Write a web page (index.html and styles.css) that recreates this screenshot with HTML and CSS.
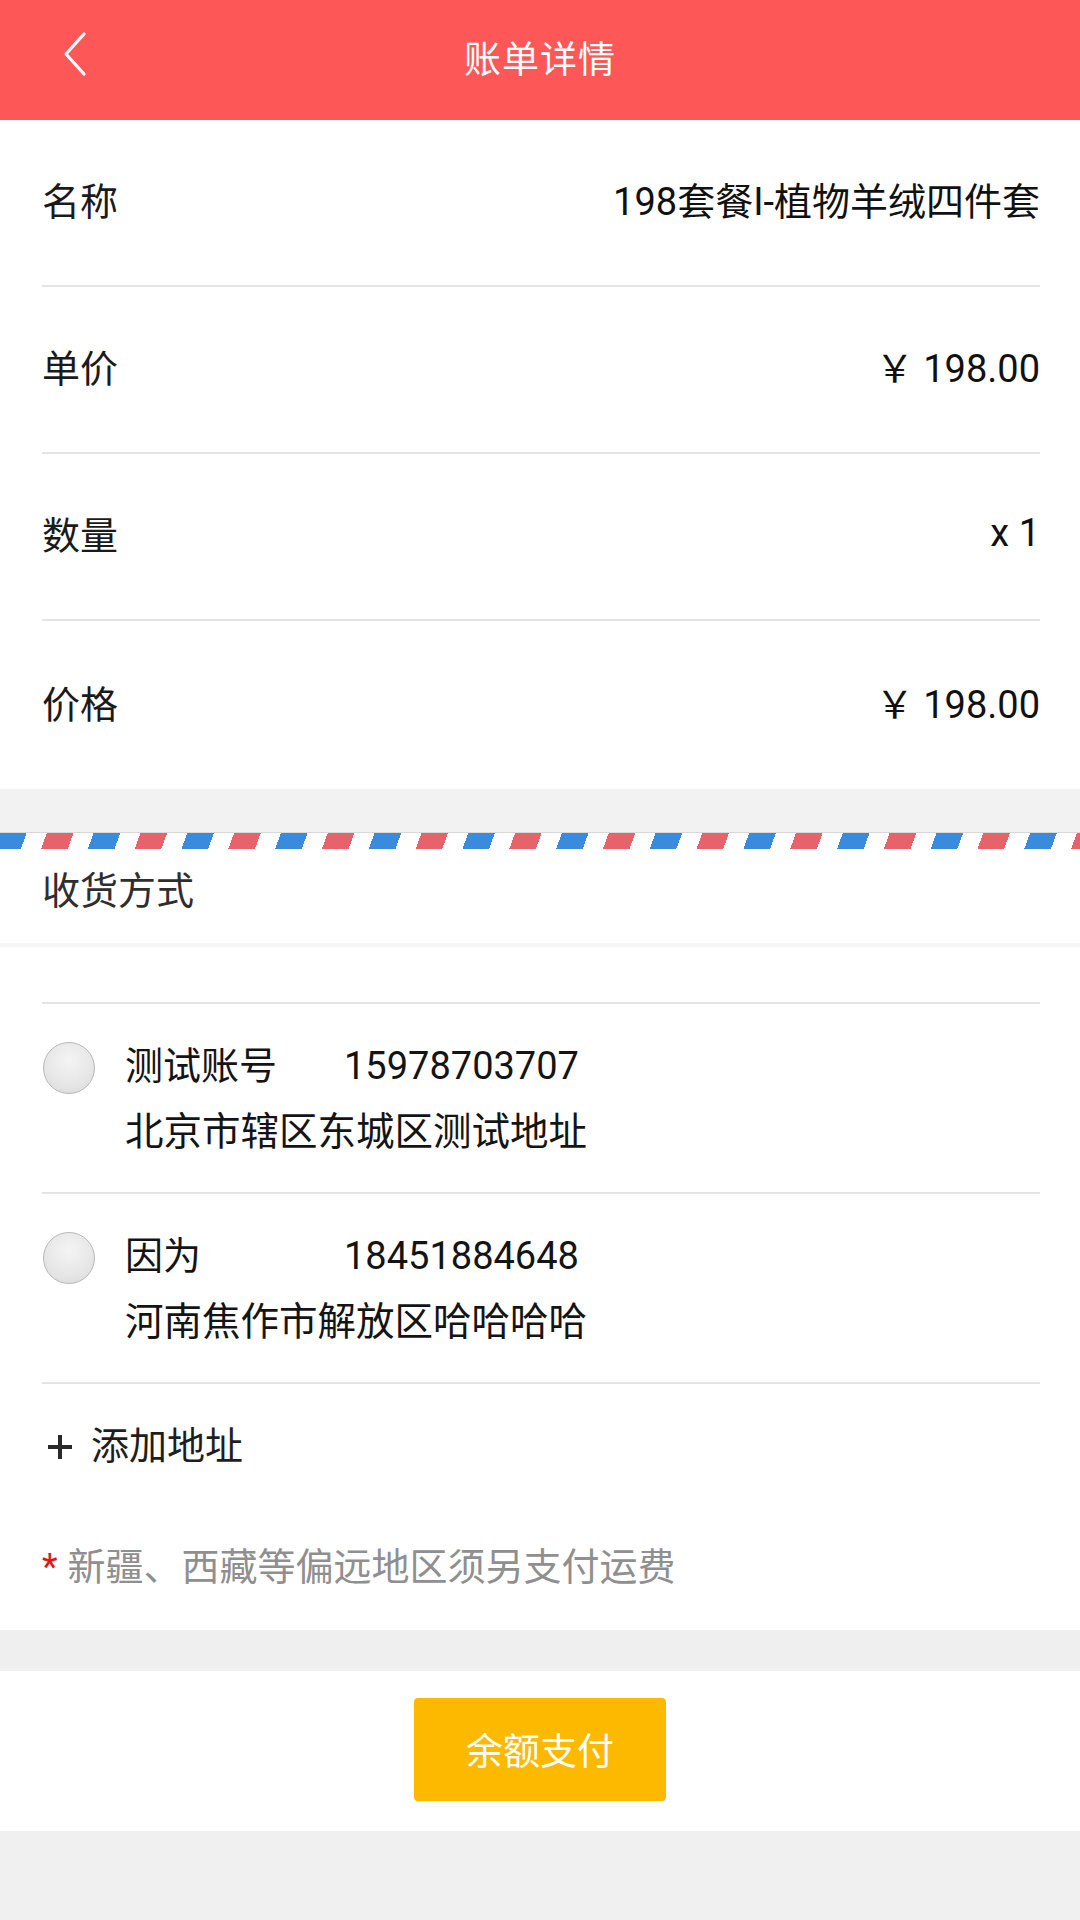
FILE: index.html
```html
<!DOCTYPE html>
<html lang="zh-CN">
<head>
<meta charset="utf-8">
<title>账单详情</title>
<link rel="stylesheet" href="styles.css">
</head>
<body>
<div class="page">
  <header class="topbar">
    <span class="back">
      <svg width="30" height="46" viewBox="0 0 30 46"><polyline points="24,3 6,23 24,43" fill="none" stroke="#fff" stroke-width="3.2" stroke-linecap="round" stroke-linejoin="round"/></svg>
    </span>
    <h1 class="title">账单详情</h1>
  </header>

  <section class="info">
    <div class="row"><span class="label">名称</span><span class="value">198套餐I-植物羊绒四件套</span></div>
    <div class="row"><span class="label">单价</span><span class="value">￥ 198.00</span></div>
    <div class="row"><span class="label">数量</span><span class="value">x 1</span></div>
    <div class="row last"><span class="label">价格</span><span class="value">￥ 198.00</span></div>
  </section>

  <div class="gap"></div>
  <div class="airmail"></div>

  <section class="shipping">
    <div class="ship-head">收货方式</div>
    <div class="ship-body">
      <div class="addr">
        <span class="radio"></span>
        <span class="name">测试账号</span>
        <span class="phone">15978703707</span>
        <span class="detail">北京市辖区东城区测试地址</span>
      </div>
      <div class="addr">
        <span class="radio"></span>
        <span class="name">因为</span>
        <span class="phone">18451884648</span>
        <span class="detail">河南焦作市解放区哈哈哈哈</span>
      </div>
      <div class="add">
        <svg class="plus" width="28" height="28" viewBox="0 0 28 28"><path d="M14 2V26M2 14H26" stroke="#2a2a2a" stroke-width="4"/></svg>
        <span>添加地址</span>
      </div>
      <div class="tip"><span class="star">*</span><span>新疆、西藏等偏远地区须另支付运费</span></div>
    </div>
  </section>

  <div class="gap small"></div>

  <section class="paybar">
    <button class="pay">余额支付</button>
  </section>
</div>
</body>
</html>
```

FILE: styles.css
```css
* { box-sizing: border-box; }
html, body { margin: 0; padding: 0; }
body {
  width: 1080px;
  min-height: 1920px;
  background: #f0f0f1;
  font-family: Roboto, "Noto Sans CJK SC", "Noto Sans", sans-serif;
  color: #141414;
}
.page { display: flex; flex-direction: column; }

.topbar {
  height: 120px;
  background: #fe5757;
  display: flex;
  align-items: center;
  justify-content: center;
  position: relative;
}
.back {
  position: absolute;
  left: 60px;
  top: 31px;
  display: flex;
}
.title {
  margin: 0;
  font-weight: 400;
  font-size: 37px;
  color: #fff;
  letter-spacing: 1px;
  padding-bottom: 6px;
}

.info { background: #fff; padding: 0 40px 0 42px; }
.row {
  height: 167px;
  display: flex;
  justify-content: space-between;
  align-items: center;
  border-bottom: 2px solid #e4e4e4;
  font-size: 38px;
  padding-bottom: 8px;
}
.row.last { border-bottom: none; height: 168px; padding-bottom: 8px; }
.label { color: #1a1a1a; }
.value { color: #111; }

.gap { height: 43px; background: #f2f2f2; }
.gap.small { height: 41px; background: #efeff0; }

.airmail {
  height: 17px;
  border-top: 1px solid #d8d8d8;
  background: repeating-linear-gradient(110deg,
    #3a8bdb 0, #3a8bdb 25px,
    #ffffff 25px, #ffffff 44px,
    #e8626b 44px, #e8626b 69px,
    #ffffff 69px, #ffffff 88px);
}

.shipping { background: #fff; }
.ship-head {
  height: 98px;
  padding: 20px 42px 0;
  font-size: 38px;
  line-height: 44px;
  color: #2e2e2e;
  border-bottom: 4px solid #f6f6f6;
}
.ship-body {
  padding: 55px 40px 30px 42px;
}
.addr {
  display: grid;
  grid-template-columns: 83px 219px 1fr;
  grid-template-rows: 65px 65px;
  border-top: 2px solid #e4e4e4;
  padding: 30px 0 28px;
  font-size: 38px;
  line-height: 65px;
  color: #141414;
}
.radio {
  grid-row: 1;
  grid-column: 1;
  align-self: center;
  width: 52px;
  height: 52px;
  border-radius: 50%;
  border: 1.5px solid #b8b8b8;
  background: radial-gradient(circle at 50% 35%, #f4f4f4 0, #e6e6e6 60%, #d8d8d8 100%);
  margin-left: 1px;
  margin-top: 2px;
}
.name { grid-row: 1; grid-column: 2; }
.phone { grid-row: 1; grid-column: 3; }
.detail { grid-row: 2; grid-column: 2 / 4; font-size: 38.5px; }

.add {
  border-top: 2px solid #e4e4e4;
  padding-top: 31px;
  display: flex;
  align-items: center;
  height: 96px;
  font-size: 38px;
  line-height: 65px;
  color: #1e1e1e;
}
.add .plus { margin: 0 17px 0 4px; }

.tip {
  margin-top: 57px;
  font-size: 38px;
  line-height: 65px;
  color: #8f8f8f;
  display: flex;
}
.star { color: #e01515; font-size: 36px; margin-right: 10px; }

.paybar {
  height: 160px;
  background: #fff;
  display: flex;
  align-items: center;
  justify-content: center;
}
.pay {
  width: 252px;
  height: 103px;
  border: none;
  border-radius: 4px;
  background: #fcb900;
  color: #fff;
  font-family: Roboto, "Noto Sans CJK SC", sans-serif;
  font-size: 37px;
  margin-top: -4px;
}
```
